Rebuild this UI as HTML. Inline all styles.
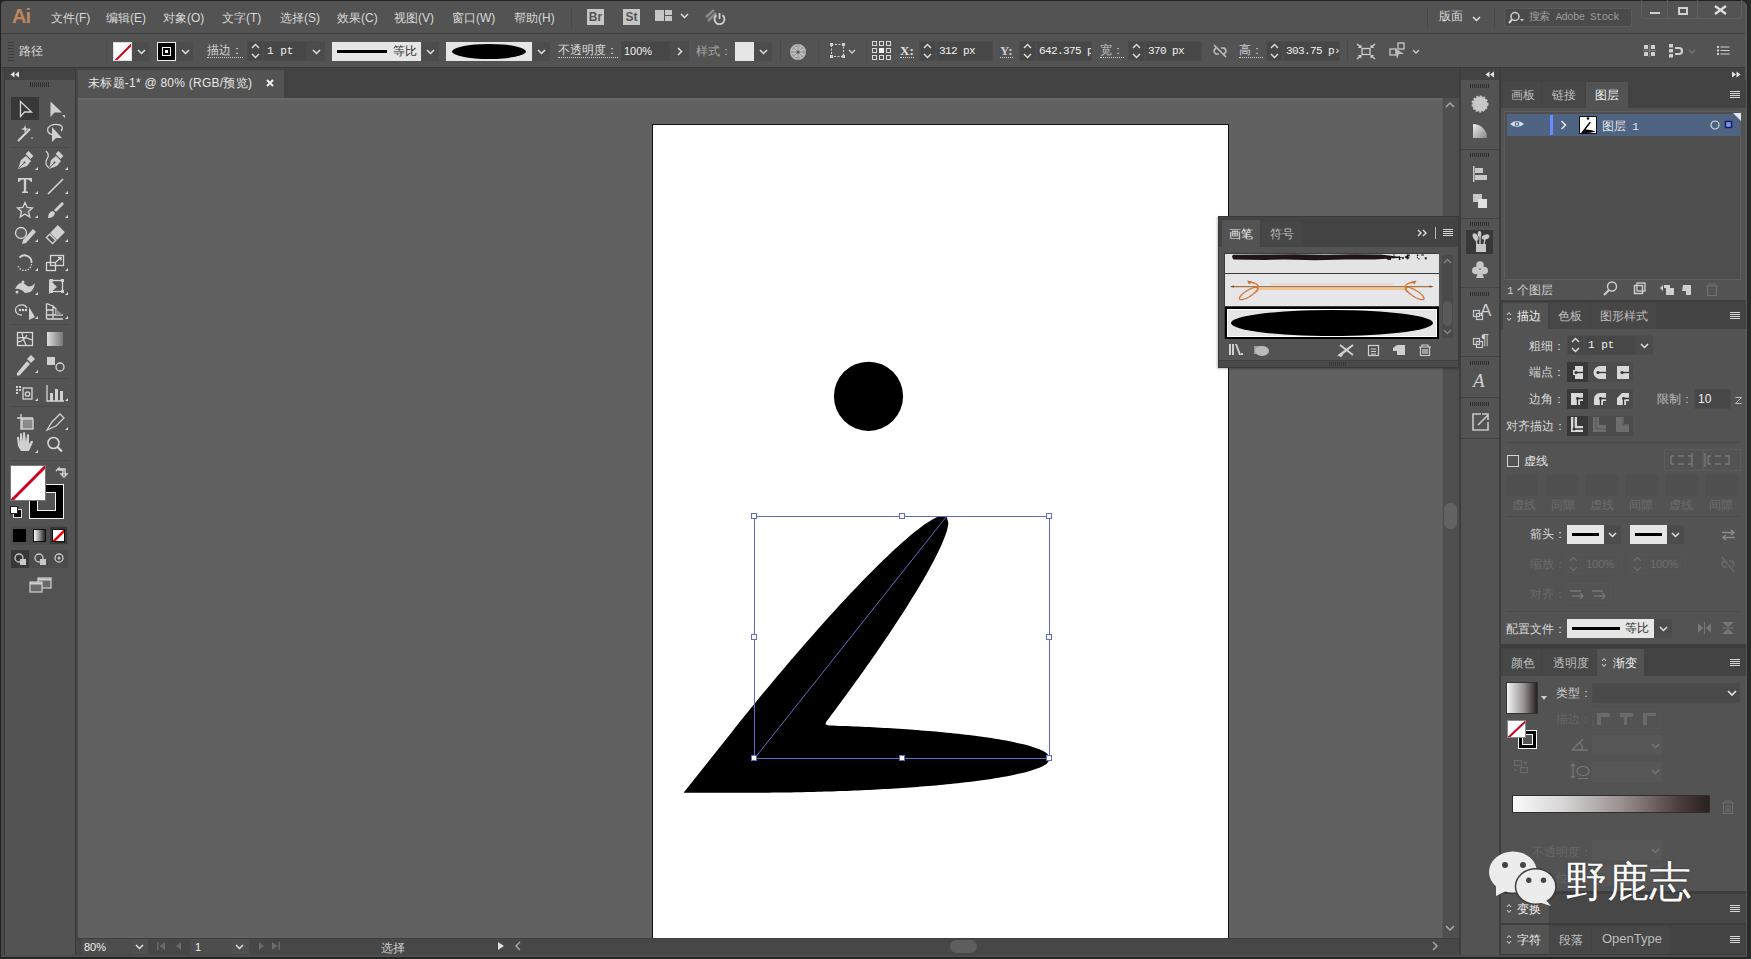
<!DOCTYPE html>
<html><head><meta charset="utf-8">
<style>
*{margin:0;padding:0;box-sizing:border-box}
html,body{width:1751px;height:959px;overflow:hidden;background:#2a2a2a;font-family:"Liberation Sans",sans-serif;color:#d8d8d8}
.a{position:absolute}
.t{position:absolute;white-space:nowrap;font-size:12px;line-height:14px}
.m{font-family:"Liberation Mono",monospace}
.s{font-family:"Liberation Serif",serif}
.box{position:absolute;background:#474747;border:1px solid #4c4c4c}
.lite{position:absolute;background:#e6e6e6}
.ul{border-bottom:1px dotted #cfcfcf}
svg{position:absolute;overflow:visible}
.dim{color:#6e6e6e}
</style></head><body>
<!-- window -->
<div class="a" style="left:0;top:0;width:1751px;height:959px;background:#222"></div>
<div class="a" style="left:1px;top:1px;width:1745px;height:955px;background:#535353;border-radius:4px 4px 0 0"></div>

<!-- ============ MENU BAR ============ -->
<div class="a" style="left:1px;top:33px;width:1745px;height:1px;background:#3f3f3f"></div>
<div class="t" style="left:12px;top:6px;font-size:20px;line-height:20px;font-weight:bold;color:#bf875e;letter-spacing:-1px">Ai</div>
<div class="t" style="left:51px;top:11px">文件(F)</div>
<div class="t" style="left:106px;top:11px">编辑(E)</div>
<div class="t" style="left:163px;top:11px">对象(O)</div>
<div class="t" style="left:222px;top:11px">文字(T)</div>
<div class="t" style="left:280px;top:11px">选择(S)</div>
<div class="t" style="left:337px;top:11px">效果(C)</div>
<div class="t" style="left:394px;top:11px">视图(V)</div>
<div class="t" style="left:452px;top:11px">窗口(W)</div>
<div class="t" style="left:514px;top:11px">帮助(H)</div>
<div class="a" style="left:571px;top:8px;width:1px;height:22px;background:#4a4a4a"></div>
<div class="a" style="left:587px;top:9px;width:17px;height:16px;background:#c6c6c6"></div>
<div class="t" style="left:588px;top:10px;font-size:12px;font-weight:bold;color:#555;width:15px;text-align:center">Br</div>
<div class="a" style="left:623px;top:9px;width:17px;height:16px;background:#c6c6c6"></div>
<div class="t" style="left:624px;top:10px;font-size:12px;font-weight:bold;color:#555;width:15px;text-align:center">St</div>
<div class="a" style="left:655px;top:10px;width:9px;height:11px;background:#c6c6c6"></div>
<div class="a" style="left:665px;top:10px;width:7px;height:5px;background:#c6c6c6"></div>
<div class="a" style="left:665px;top:16px;width:7px;height:5px;background:#c6c6c6"></div>
<svg style="left:680px;top:13px" width="9" height="6"><path d="M1 1 L4.5 4.5 L8 1" stroke="#e0e0e0" stroke-width="1.5" fill="none"/></svg>
<svg style="left:704px;top:8px" width="24" height="18"><path d="M2 9 L10 2 M4 13 L12 5" stroke="#8a8a8a" stroke-width="2.5" fill="none"/><path d="M12.5 7.2 A5 5 0 1 0 18.5 7.2" stroke="#d0d0d0" stroke-width="1.8" fill="none"/><path d="M15.5 5 V11" stroke="#d0d0d0" stroke-width="1.8"/></svg>

<div class="a" style="left:1427px;top:8px;width:1px;height:20px;background:#474747"></div>
<div class="t" style="left:1439px;top:9px;font-size:12px">版面</div>
<svg style="left:1472px;top:16px" width="9" height="6"><path d="M1 1 L4.5 4.5 L8 1" stroke="#e0e0e0" stroke-width="1.5" fill="none"/></svg>
<div class="a" style="left:1494px;top:8px;width:1px;height:20px;background:#474747"></div>
<div class="a" style="left:1504px;top:8px;width:128px;height:19px;background:#4a4a4a;border:1px solid #5a5a5a;border-radius:2px"></div>
<svg style="left:1508px;top:11px" width="18" height="14"><circle cx="7" cy="5.5" r="4" stroke="#cfcfcf" stroke-width="1.5" fill="none"/><path d="M4 8.5 L1 12" stroke="#cfcfcf" stroke-width="2"/><path d="M12 8 L16 8 L14 10.5Z" fill="#cfcfcf"/></svg>
<div class="t m" style="left:1529px;top:10px;font-size:10.5px;color:#9c9c9c;letter-spacing:-0.55px">搜索 Adobe Stock</div>
<div class="a" style="left:1641px;top:0px;width:101px;height:19px;border:1px solid #5e5e5e;border-top:none;border-radius:0 0 3px 3px"></div>
<div class="a" style="left:1667px;top:0px;width:1px;height:19px;background:#5e5e5e"></div>
<div class="a" style="left:1697px;top:0px;width:1px;height:19px;background:#5e5e5e"></div>
<div class="a" style="left:1650px;top:12px;width:10px;height:2px;background:#d0d0d0"></div>
<div class="a" style="left:1678px;top:7px;width:10px;height:8px;border:2px solid #d0d0d0;border-top-width:2px"></div>
<svg style="left:1714px;top:5px" width="13" height="10"><path d="M1 1 L12 9 M12 1 L1 9" stroke="#e0e0e0" stroke-width="2.2"/></svg>
<!-- ============ CONTROL BAR ============ -->
<div class="a" style="left:1px;top:67px;width:1745px;height:1px;background:#3a3a3a"></div>
<div class="a" style="left:8px;top:42px;width:6px;height:19px;background:repeating-linear-gradient(#3d3d3d 0 1px,transparent 1px 3px)"></div>
<div class="t" style="left:19px;top:44px">路径</div>
<div class="a" style="left:106px;top:40px;width:1px;height:22px;background:#4a4a4a"></div>
<!-- fill swatch -->
<div class="a" style="left:113px;top:42px;width:19px;height:19px;background:#fff;border:1px solid #ddd;overflow:hidden"><svg style="left:0;top:0" width="19" height="19"><path d="M1 18 L18 1" stroke="#d0021b" stroke-width="2"/></svg></div>
<div class="a" style="left:133px;top:42px;width:16px;height:19px;background:#4c4c4c"></div>
<svg style="left:137px;top:49px" width="9" height="6"><path d="M1 1 L4.5 4.5 L8 1" stroke="#e0e0e0" stroke-width="1.5" fill="none"/></svg>
<!-- stroke swatch -->
<div class="a" style="left:157px;top:42px;width:19px;height:19px;background:#000;border:1px solid #eee"></div>
<div class="a" style="left:162px;top:47px;width:9px;height:9px;border:1px solid #fff"></div>
<div class="a" style="left:165px;top:50px;width:3px;height:3px;background:#fff"></div>
<div class="a" style="left:177px;top:42px;width:16px;height:19px;background:#4c4c4c"></div>
<svg style="left:181px;top:49px" width="9" height="6"><path d="M1 1 L4.5 4.5 L8 1" stroke="#e0e0e0" stroke-width="1.5" fill="none"/></svg>
<div class="t ul" style="left:207px;top:44px;line-height:13px">描边：</div>
<!-- stroke weight -->
<div class="box" style="left:247px;top:41px;width:16px;height:20px"></div>
<svg style="left:251px;top:43px" width="9" height="16"><path d="M1 5 L4.5 1.5 L8 5 M1 11 L4.5 14.5 L8 11" stroke="#e0e0e0" stroke-width="1.4" fill="none"/></svg>
<div class="box" style="left:263px;top:41px;width:44px;height:20px"></div>
<div class="t m" style="left:267px;top:44px;font-size:11px;color:#f0f0f0">1 pt</div>
<div class="box" style="left:307px;top:41px;width:18px;height:20px;background:#4c4c4c"></div>
<svg style="left:312px;top:49px" width="9" height="6"><path d="M1 1 L4.5 4.5 L8 1" stroke="#e0e0e0" stroke-width="1.5" fill="none"/></svg>
<!-- profile -->
<div class="lite" style="left:332px;top:42px;width:89px;height:19px"></div>
<div class="a" style="left:337px;top:50px;width:50px;height:3px;background:#000"></div>
<div class="t" style="left:393px;top:44px;color:#333">等比</div>
<div class="a" style="left:422px;top:42px;width:17px;height:19px;background:#4c4c4c"></div>
<svg style="left:426px;top:49px" width="9" height="6"><path d="M1 1 L4.5 4.5 L8 1" stroke="#e0e0e0" stroke-width="1.5" fill="none"/></svg>
<!-- brush -->
<div class="lite" style="left:446px;top:42px;width:86px;height:19px"></div>
<div class="a" style="left:452px;top:44px;width:74px;height:15px;background:#000;border-radius:50%"></div>
<div class="a" style="left:533px;top:42px;width:17px;height:19px;background:#4c4c4c"></div>
<svg style="left:537px;top:49px" width="9" height="6"><path d="M1 1 L4.5 4.5 L8 1" stroke="#e0e0e0" stroke-width="1.5" fill="none"/></svg>
<div class="t ul" style="left:558px;top:44px;line-height:13px">不透明度：</div>
<div class="box" style="left:621px;top:41px;width:50px;height:20px"></div>
<div class="t" style="left:624px;top:44px;font-size:11px;color:#f0f0f0">100%</div>
<div class="box" style="left:671px;top:41px;width:18px;height:20px;background:#4c4c4c"></div>
<svg style="left:677px;top:47px" width="6" height="9"><path d="M1 1 L4.5 4.5 L1 8" stroke="#e0e0e0" stroke-width="1.5" fill="none"/></svg>
<div class="t" style="left:696px;top:44px;color:#a8a8a8">样式：</div>
<div class="lite" style="left:735px;top:42px;width:19px;height:19px"></div>
<div class="a" style="left:754px;top:42px;width:18px;height:19px;background:#4c4c4c"></div>
<svg style="left:759px;top:49px" width="9" height="6"><path d="M1 1 L4.5 4.5 L8 1" stroke="#e0e0e0" stroke-width="1.5" fill="none"/></svg>
<div class="a" style="left:780px;top:40px;width:1px;height:22px;background:#4a4a4a"></div>
<svg style="left:789px;top:43px" width="18" height="18"><circle cx="9" cy="9" r="8" fill="#bdbdbd"/><circle cx="9" cy="9" r="6" fill="none" stroke="#7a7a7a" stroke-width="0.8" stroke-dasharray="2 1.5"/><path d="M9 1 V17 M1 9 H17 M3.3 3.3 L14.7 14.7 M14.7 3.3 L3.3 14.7" stroke="#8a8a8a" stroke-width="0.8"/><circle cx="9" cy="9" r="1.5" fill="#555"/></svg>
<div class="a" style="left:818px;top:40px;width:1px;height:22px;background:#4a4a4a"></div>
<svg style="left:830px;top:43px" width="28" height="16"><rect x="1.5" y="1.5" width="12" height="12" fill="none" stroke="#cfcfcf" stroke-width="1" stroke-dasharray="2 1.5"/><rect x="0" y="0" width="3" height="3" fill="#cfcfcf"/><rect x="12" y="0" width="3" height="3" fill="#cfcfcf"/><rect x="0" y="12" width="3" height="3" fill="#cfcfcf"/><rect x="12" y="12" width="3" height="3" fill="#cfcfcf"/><path d="M19 7 L22 10 L25 7" stroke="#cfcfcf" stroke-width="1.3" fill="none"/></svg>
<div class="a" style="left:866px;top:40px;width:1px;height:22px;background:#4a4a4a"></div>
<svg style="left:872px;top:41px" width="20" height="20"><g fill="none" stroke="#d8d8d8" stroke-width="1"><rect x="0.5" y="0.5" width="4" height="4"/><rect x="7.5" y="0.5" width="4" height="4"/><rect x="14.5" y="0.5" width="4" height="4"/><rect x="0.5" y="7.5" width="4" height="4"/><rect x="14.5" y="7.5" width="4" height="4"/><rect x="0.5" y="14.5" width="4" height="4"/><rect x="7.5" y="14.5" width="4" height="4"/><rect x="14.5" y="14.5" width="4" height="4"/></g><rect x="7" y="7" width="5" height="5" fill="#f0f0f0"/></svg>
<div class="t s ul" style="left:900px;top:44px;font-size:13px;font-weight:bold;line-height:13px;color:#e0e0e0">X:</div>
<div class="box" style="left:919px;top:41px;width:17px;height:20px"></div>
<svg style="left:923px;top:43px" width="9" height="16"><path d="M1 5 L4.5 1.5 L8 5 M1 11 L4.5 14.5 L8 11" stroke="#e0e0e0" stroke-width="1.4" fill="none"/></svg>
<div class="box" style="left:936px;top:41px;width:57px;height:20px"></div>
<div class="t m" style="left:939px;top:44px;font-size:11px;letter-spacing:-0.6px;color:#f0f0f0">312 px</div>
<div class="t s ul" style="left:1000px;top:44px;font-size:13px;font-weight:bold;line-height:13px;color:#c8c8d8">Y:</div>
<div class="box" style="left:1019px;top:41px;width:17px;height:20px"></div>
<svg style="left:1023px;top:43px" width="9" height="16"><path d="M1 5 L4.5 1.5 L8 5 M1 11 L4.5 14.5 L8 11" stroke="#e0e0e0" stroke-width="1.4" fill="none"/></svg>
<div class="box" style="left:1036px;top:41px;width:56px;height:20px;overflow:hidden"><div class="t m" style="left:2px;top:2px;font-size:11px;letter-spacing:-0.6px;color:#f0f0f0">642.375 px</div></div>
<div class="t ul" style="left:1100px;top:44px;line-height:13px;color:#c8c8d8">宽：</div>
<div class="box" style="left:1128px;top:41px;width:17px;height:20px"></div>
<svg style="left:1132px;top:43px" width="9" height="16"><path d="M1 5 L4.5 1.5 L8 5 M1 11 L4.5 14.5 L8 11" stroke="#e0e0e0" stroke-width="1.4" fill="none"/></svg>
<div class="box" style="left:1145px;top:41px;width:57px;height:20px"></div>
<div class="t m" style="left:1148px;top:44px;font-size:11px;letter-spacing:-0.6px;color:#f0f0f0">370 px</div>
<svg style="left:1212px;top:44px" width="16" height="14"><path d="M4 4 Q0 7 4 10 L7 10 M9 4 L12 4 Q16 7 12 10 M2 1 L14 13" stroke="#bdbdbd" stroke-width="1.6" fill="none"/></svg>
<div class="t ul" style="left:1239px;top:44px;line-height:13px;color:#c8c8d8">高：</div>
<div class="box" style="left:1266px;top:41px;width:17px;height:20px"></div>
<svg style="left:1270px;top:43px" width="9" height="16"><path d="M1 5 L4.5 1.5 L8 5 M1 11 L4.5 14.5 L8 11" stroke="#e0e0e0" stroke-width="1.4" fill="none"/></svg>
<div class="box" style="left:1283px;top:41px;width:57px;height:20px;overflow:hidden"><div class="t m" style="left:2px;top:2px;font-size:11px;letter-spacing:-0.6px;color:#f0f0f0">303.75 p›</div></div>
<div class="a" style="left:1347px;top:40px;width:1px;height:22px;background:#4a4a4a"></div>
<svg style="left:1356px;top:43px" width="20" height="17"><rect x="6" y="5.5" width="8" height="6" fill="none" stroke="#cfcfcf" stroke-width="1.3"/><path d="M1 1 L4.5 4 M19 1 L15.5 4 M1 16 L4.5 13 M19 16 L15.5 13" stroke="#cfcfcf" stroke-width="1.5"/><path d="M5.5 5 L1.8 5 L5.5 1.5Z M14.5 5 L18.2 5 L14.5 1.5Z M5.5 12 L1.8 12 L5.5 15.5Z M14.5 12 L18.2 12 L14.5 15.5Z" fill="#cfcfcf"/></svg>
<svg style="left:1389px;top:42px" width="34" height="18"><rect x="1" y="7" width="6" height="6" fill="none" stroke="#cfcfcf" stroke-width="1.2"/><rect x="9" y="1" width="6" height="6" fill="none" stroke="#cfcfcf" stroke-width="1.2"/><path d="M6 6 L15 12 L10 12 L8 17Z" fill="#bdbdbd"/><path d="M24 8 L27 11 L30 8" stroke="#cfcfcf" stroke-width="1.3" fill="none"/></svg>
<svg style="left:1643px;top:44px" width="14" height="14"><g fill="#d0d0d0"><rect x="1" y="1" width="4" height="4"/><rect x="8" y="1" width="4" height="4"/><rect x="1" y="8" width="4" height="4"/><rect x="8" y="8" width="4" height="4"/></g><path d="M6.5 0 V13 M0 6.5 H13" stroke="#8a8a8a" stroke-width="0.8"/></svg>
<svg style="left:1668px;top:43px" width="34" height="16"><g fill="#d0d0d0"><rect x="1" y="1" width="4" height="3.5"/><rect x="1" y="6" width="4" height="3.5"/><rect x="1" y="11" width="4" height="3.5"/></g><path d="M7 5 H11 Q14 5 14 8 Q14 11 11 11 H7" stroke="#d0d0d0" stroke-width="2.2" fill="none"/><path d="M21 7 L24 10 L27 7" stroke="#777" stroke-width="1.3" fill="none"/></svg>
<svg style="left:1717px;top:46px" width="14" height="10"><g fill="#d0d0d0"><rect x="0" y="0" width="2" height="2"/><rect x="0" y="3.5" width="2" height="2"/><rect x="0" y="7" width="2" height="2"/><rect x="3.5" y="0.5" width="9" height="1"/><rect x="3.5" y="4" width="9" height="1"/><rect x="3.5" y="7.5" width="9" height="1"/></g></svg>
<!-- ============ LEFT TOOLBAR ============ -->
<div class="a" style="left:1px;top:68px;width:3px;height:888px;background:#4a4a4a"></div>
<div class="a" style="left:4px;top:68px;width:1px;height:888px;background:#383838"></div>
<div class="a" style="left:75px;top:68px;width:1px;height:888px;background:#3a3a3a"></div>
<div class="a" style="left:76px;top:68px;width:2px;height:888px;background:#474747"></div>
<div class="a" style="left:5px;top:68px;width:70px;height:12px;background:#434343"></div>
<svg style="left:10px;top:71px" width="10" height="7"><path d="M4.5 0.5 L0.5 3.5 L4.5 6.5Z M9 0.5 L5 3.5 L9 6.5Z" fill="#e6e6e6"/></svg>
<div class="a" style="left:30px;top:82px;width:20px;height:5px;background:repeating-linear-gradient(90deg,#2e2e2e 0 1px,transparent 1px 2px)"></div>
<div class="a" style="left:11px;top:97px;width:28px;height:23px;background:#383838"></div>
<g></g>
<svg style="left:0;top:0" width="80" height="600">
<g fill="none" stroke="#d6d6d6" stroke-width="1.3">
 <!-- selection -->
 <path d="M20.5 101.5 V116.5 L24.5 112 L31.5 112 Z" />
 <!-- magic wand -->
 <path d="M18 141 L30 129" stroke-width="2"/>
 <!-- lasso -->
 <path d="M53 135 Q46 133 48 128 Q52 123 60 125 Q64 127 61 131" />
 <!-- pen outline etc -->
 <!-- T -->
 <!-- line -->
 <path d="M48 194 L63 179" stroke-width="1.6"/>
 <!-- star -->
 <path d="M25 202.5 L27.3 207.5 L32.5 208 L28.5 211.5 L29.8 217 L25 214 L20.2 217 L21.5 211.5 L17.5 208 L22.7 207.5 Z" fill="#5c5c5c"/>
 <!-- shaper -->
 <circle cx="21" cy="233" r="5.5" fill="#5c5c5c"/>
 <!-- rotate -->
 <path d="M19.5 257.5 A7 7 0 0 1 31.5 263" stroke-width="1.8"/><path d="M31.5 264 A7 7 0 0 1 18 266" stroke-dasharray="1.5 1.3"/>
 <!-- scale -->
 <rect x="46.5" y="262.5" width="9" height="8"/><rect x="50.5" y="255.5" width="13" height="10"/><path d="M56 262 L61 257.5 M58 257.5 H61 V260.5"/>
 <!-- free transform -->
 <rect x="51.5" y="280.5" width="11" height="11"/><g fill="#d0d0d0" stroke="none"><rect x="50" y="279" width="3" height="3"/><rect x="61" y="279" width="3" height="3"/><rect x="50" y="290" width="3" height="3"/><rect x="61" y="290" width="3" height="3"/></g>
 <!-- shape builder -->
 <path d="M27 308 A6 5 0 1 0 22 315"/><circle cx="20" cy="310" r="0.6"/><circle cx="23" cy="310" r="0.6"/><circle cx="26" cy="310" r="0.6"/>
 <!-- perspective -->
 <path d="M46.5 303.5 V319 M46.5 303.5 L53 306 V319 M46.5 310 H53 M46.5 315 H63 M46.5 319 H63 M53 306 L56 309 V315"/><path d="M56 309 L63 315 H56Z" fill="#8a8a8a" stroke="none"/>
 <!-- mesh -->
 <rect x="17.5" y="332.5" width="15" height="13"/><path d="M18 338 Q25 336 32 340 M22 333 Q23 340 26 345 M18 342 Q24 341 27 335"/>
 <!-- blend -->
 <circle cx="60" cy="367" r="4"/>
 <!-- symbol sprayer -->
 <rect x="23" y="388" width="9" height="11"/><circle cx="27.5" cy="394" r="2.2"/>
 <!-- graph -->
 <path d="M47 385 V401 H64"/>
 <!-- artboard -->
 <path d="M17 418 H33 M21 414 V430"/><rect x="22" y="419" width="11" height="10" fill="#8a8a8a"/>
 <!-- zoom -->
 <circle cx="53.5" cy="443" r="5.5" stroke-width="1.6"/><path d="M57.5 447 L62 451.5" stroke-width="2.2"/>
</g>
<g fill="#d0d0d0">
 <!-- direct selection -->
 <path d="M50.5 101.5 V117 L54.5 112.5 L62 112.5 Z"/>
 <path d="M62 115 L65 115 L65 118 Z"/>
 <path d="M25 125 L26 128 L29 129 L26 130 L25 133 L24 130 L21 129 L24 128Z"/>
 <path d="M32 137 L33 138 L32 139 L31 138Z"/>
 <path d="M52 127 L52 142 L56 138 L62 138Z"/>
 <!-- pen -->
 <path d="M18 169 L21 160 L26 156 L31 161 L27 166 Z"/><rect x="26" y="153" width="7" height="4" transform="rotate(45 29.5 155)"/>
 <path d="M49 169 L51 160 L56 156 L61 161 L57 166 Z"/><rect x="56" y="153" width="7" height="4" transform="rotate(45 59.5 155)"/><path d="M49 168 Q44 164 47 159 Q50 155 46 151" fill="none" stroke="#d0d0d0" stroke-width="1.3"/>
 <path d="M19 168 L24 163 M49.5 168 L54 163" stroke="#535353" stroke-width="1"/><circle cx="24.5" cy="162.5" r="1" fill="#535353"/><circle cx="54.5" cy="162.5" r="1" fill="#535353"/>
 <!-- T -->
 <path d="M18 178 H32 V182 H31 Q30 179.5 27 179.5 H26.2 V191.5 H28 V193 H22 V191.5 H23.8 V179.5 H23 Q20 179.5 19 182 H18Z"/>
 <!-- brush -->
 <path d="M48 218 Q48 212 53 211 L55 213 Q54 218 48 218Z"/><path d="M54 210 L62 202 L64 204 L56 212Z"/>
 <!-- shaper pencil -->
 <path d="M23 240 L33 229 L36 232 L26 243 L22 244Z"/>
 <!-- eraser -->
 <g transform="rotate(45 55 235)"><rect x="50" y="226" width="10" height="11"/><rect x="50.7" y="238.2" width="8.6" height="4.6" fill="none" stroke="#d0d0d0" stroke-width="1.4"/></g>
 <!-- warp -->
 <path d="M15 289 Q20 279 26 285 Q30 289 35 283 Q34 293 25 293 Q20 288 15 289Z"/>
 <circle cx="17" cy="292" r="1.5"/><circle cx="23" cy="282" r="1.5"/>
 <path d="M49 279 L49 294 L57 287Z"/>
 <path d="M29 307 L29 320 L35 317Z"/>
 <!-- gradient tool -->
 <rect x="47" y="332" width="16" height="14" fill="url(#gt)"/>
 <!-- eyedropper -->
 <path d="M17 373 L27 361 L30 364 L20 375 Q16 377 17 373Z"/><path d="M27 359 L31 355 L35 359 L31 363Z"/>
 <rect x="47" y="357" width="8" height="8"/>
 <!-- sprayer dots -->
 <rect x="16" y="386" width="2" height="2"/><rect x="19" y="386" width="2" height="2"/><rect x="16" y="389" width="2" height="2"/><rect x="19" y="389" width="2" height="2"/><rect x="16" y="392" width="2" height="2"/>
 <!-- graph bars -->
 <rect x="50" y="393" width="3" height="8"/><rect x="55" y="389" width="3" height="12"/><rect x="60" y="391" width="3" height="10"/>
 <!-- slice -->
 <path d="M47 430 L52 422 L60 414 L64 418 L56 426 Z" fill="none" stroke="#d0d0d0" stroke-width="1.3"/>
 <!-- hand -->
 <path d="M18 446 L17 438 Q17 436 19 437 L20 443 L20 434 Q21 432 22 434 L23 442 L23 433 Q24 431 25 433 L26 442 L27 435 Q28 433 29 435 L29 444 L31 441 Q33 440 33 442 L29 451 H21 Z"/>
</g>
<defs><linearGradient id="gt"><stop offset="0" stop-color="#ddd"/><stop offset="1" stop-color="#777"/></linearGradient></defs>
<g fill="#d6d6d6">
 <path d="M35 170 L38 170 L38 167Z"/><path d="M65 170 L68 170 L68 167Z"/>
 <path d="M35 194 L38 194 L38 191Z"/><path d="M65 194 L68 194 L68 191Z"/>
 <path d="M35 218 L38 218 L38 215Z"/><path d="M65 218 L68 218 L68 215Z"/>
 <path d="M35 242 L38 242 L38 239Z"/><path d="M65 242 L68 242 L68 239Z"/>
 <path d="M35 271 L38 271 L38 268Z"/><path d="M65 271 L68 271 L68 268Z"/>
 <path d="M35 295 L38 295 L38 292Z"/><path d="M65 295 L68 295 L68 292Z"/>
 <path d="M35 319 L38 319 L38 316Z"/><path d="M65 319 L68 319 L68 316Z"/>
 <path d="M35 373 L38 373 L38 370Z"/>
 <path d="M35 401 L38 401 L38 398Z"/><path d="M65 401 L68 401 L68 398Z"/>
 <path d="M65 430 L68 430 L68 427Z"/><path d="M35 453 L38 453 L38 450Z"/>
</g>
<g stroke="#494949" stroke-width="1">
 <path d="M10 147.5 H70 M10 324.5 H70 M10 378.5 H70 M10 406.5 H70 M10 460.5 H70"/>
</g>
</svg>
<!-- fill stroke -->
<div class="a" style="left:29px;top:484px;width:35px;height:35px;background:#000;border:1px solid #f2f2f2"></div>
<div class="a" style="left:37px;top:492px;width:19px;height:19px;background:#535353;border:1px solid #f2f2f2"></div>
<div class="a" style="left:10px;top:465px;width:36px;height:36px;background:#fff;border:1px solid #777;overflow:hidden"><svg style="left:0;top:0" width="36" height="36"><path d="M0 35 L35 0" stroke="#d0021b" stroke-width="3"/></svg></div>
<svg style="left:54px;top:466px" width="13" height="13"><path d="M2 5 L5 2 L5 4 H9 V8 H7 L10 11 L13 8 H11 V3 H5" fill="none" stroke="#d6d6d6" stroke-width="1.4"/></svg>
<div class="a" style="left:13px;top:509px;width:9px;height:9px;background:#000;border:1px solid #ddd"></div>
<div class="a" style="left:10px;top:506px;width:8px;height:8px;background:#fff;border:1px solid #222"></div>
<div class="a" style="left:11px;top:526px;width:57px;height:19px;background:#4c4c4c"></div>
<div class="a" style="left:13px;top:529px;width:13px;height:13px;background:#000"></div>
<div class="a" style="left:33px;top:529px;width:13px;height:13px;background:linear-gradient(90deg,#fff,#222);border:1px solid #111"></div>
<div class="a" style="left:50px;top:527px;width:17px;height:17px;background:#383838"></div>
<div class="a" style="left:52px;top:529px;width:13px;height:13px;background:#fff;border:1px solid #111;overflow:hidden"><svg style="left:0;top:0" width="13" height="13"><path d="M0 12 L12 0" stroke="#e00" stroke-width="2.5"/></svg></div>
<div class="a" style="left:11px;top:550px;width:57px;height:18px;background:#4c4c4c"></div>
<div class="a" style="left:11px;top:550px;width:18px;height:18px;background:#383838"></div>
<svg style="left:13px;top:552px" width="54" height="15"><g fill="none" stroke="#c8c8c8" stroke-width="1.3"><circle cx="6" cy="6" r="4"/><circle cx="26" cy="6" r="4"/><circle cx="46" cy="6" r="4"/></g><rect x="7" y="7" width="6" height="6" fill="#c8c8c8"/><rect x="27" y="7" width="6" height="6" fill="#c8c8c8"/><circle cx="46" cy="6" r="1.5" fill="#c8c8c8"/></svg>
<svg style="left:29px;top:577px" width="24" height="17"><rect x="9" y="1" width="13" height="10" fill="#6a6a6a" stroke="#d0d0d0" stroke-width="1.2"/><rect x="1" y="5" width="12" height="10" fill="#6a6a6a" stroke="#d0d0d0" stroke-width="1.2"/><path d="M9 2.5 H22" stroke="#d0d0d0" stroke-width="2"/><path d="M1 6.5 H13" stroke="#d0d0d0" stroke-width="2"/></svg>

<!-- ============ TAB ROW / CANVAS ============ -->
<div class="a" style="left:78px;top:68px;width:1381px;height:30px;background:#434343"></div>
<div class="a" style="left:78px;top:70px;width:206px;height:28px;background:#535353"></div>
<div class="t" style="left:88px;top:76px;color:#e6e6e6;letter-spacing:0.25px">未标题-1* @ 80% (RGB/预览)</div>
<svg style="left:266px;top:79px" width="8" height="8"><path d="M1 1 L7 7 M7 1 L1 7" stroke="#f0f0f0" stroke-width="2"/></svg>
<div class="a" style="left:78px;top:98px;width:1364px;height:840px;background:#616161"></div>
<div class="a" style="left:78px;top:98px;width:1364px;height:2px;background:#686868"></div>
<div class="a" style="left:1442px;top:98px;width:17px;height:840px;background:#4f4f4f;border-left:1px solid #5a5a5a"></div>
<svg style="left:1445px;top:101px" width="10" height="7"><path d="M1 6 L5 2 L9 6" stroke="#aaa" stroke-width="1.5" fill="none"/></svg>
<svg style="left:1445px;top:925px" width="10" height="7"><path d="M1 1 L5 5 L9 1" stroke="#aaa" stroke-width="1.5" fill="none"/></svg>
<div class="a" style="left:1444px;top:503px;width:13px;height:26px;background:#626262;border-radius:6px"></div>
<!-- artboard -->
<div class="a" style="left:652px;top:124px;width:577px;height:814px;background:#fff;border:1px solid #111;border-bottom:none"></div>
<svg style="left:0;top:0" width="1440" height="940">
 <circle cx="868.5" cy="396.3" r="34.6" fill="#000"/>
 <path d="M946.5 516.5 L939.8 516.1 L935.7 517.8 L931.9 519.7 L928.4 521.9 L925.1 524.1 L921.8 526.5 L918.6 528.9 L915.5 531.3 L912.4 533.8 L909.4 536.3 L906.4 538.9 L903.4 541.5 L900.5 544.1 L897.6 546.7 L894.7 549.3 L891.8 552.0 L889.0 554.7 L886.2 557.4 L883.4 560.1 L880.6 562.8 L877.8 565.5 L875.1 568.3 L872.3 571.0 L869.6 573.8 L866.8 576.5 L864.1 579.3 L861.4 582.1 L858.7 584.9 L856.1 587.7 L853.4 590.5 L850.7 593.3 L848.1 596.1 L845.4 599.0 L842.8 601.8 L840.1 604.6 L837.5 607.5 L834.9 610.3 L832.3 613.2 L829.7 616.1 L827.1 618.9 L824.5 621.8 L821.9 624.7 L819.4 627.6 L816.8 630.5 L814.2 633.4 L811.7 636.3 L809.1 639.2 L806.6 642.1 L804.0 645.0 L801.5 647.9 L799.0 650.8 L796.4 653.8 L793.9 656.7 L791.4 659.6 L788.9 662.6 L786.4 665.5 L783.9 668.4 L781.4 671.4 L778.9 674.3 L776.4 677.3 L773.9 680.3 L771.5 683.2 L769.0 686.2 L766.5 689.2 L764.1 692.1 L761.6 695.1 L759.2 698.1 L756.7 701.1 L754.3 704.1 L751.8 707.1 L749.4 710.1 L747.0 713.1 L744.5 716.1 L742.1 719.1 L739.7 722.1 L737.3 725.1 L734.9 728.1 L732.5 731.2 L730.1 734.2 L727.7 737.2 L683.6 792.7 L758.2 792.7 L761.9 792.7 L765.6 792.7 L769.3 792.7 L773.0 792.6 L776.7 792.6 L780.4 792.6 L784.1 792.5 L787.8 792.5 L791.5 792.4 L795.2 792.3 L798.9 792.3 L802.6 792.2 L806.3 792.1 L810.0 792.0 L813.7 791.9 L817.4 791.8 L821.1 791.7 L824.8 791.6 L828.5 791.5 L832.2 791.4 L835.9 791.3 L839.6 791.1 L843.3 791.0 L847.0 790.9 L850.7 790.7 L854.4 790.6 L858.1 790.4 L861.8 790.2 L865.5 790.1 L869.2 789.9 L872.9 789.7 L876.6 789.5 L880.3 789.3 L884.0 789.1 L887.7 788.9 L891.4 788.7 L895.1 788.4 L898.8 788.2 L902.5 787.9 L906.2 787.7 L909.9 787.4 L913.6 787.2 L917.3 786.9 L921.0 786.6 L924.7 786.3 L928.4 786.0 L932.1 785.7 L935.8 785.4 L939.5 785.0 L943.2 784.7 L946.9 784.3 L950.6 783.9 L954.3 783.6 L958.0 783.2 L961.7 782.7 L965.4 782.3 L969.1 781.9 L972.8 781.4 L976.5 780.9 L980.2 780.5 L983.9 779.9 L987.6 779.4 L991.3 778.9 L995.0 778.3 L998.7 777.7 L1002.4 777.0 L1006.1 776.4 L1009.8 775.7 L1013.5 774.9 L1017.2 774.1 L1020.9 773.3 L1024.6 772.4 L1028.3 771.4 L1032.0 770.3 L1035.7 769.1 L1039.4 767.7 L1043.1 766.0 L1046.8 763.8 L1050.5 758.5 L1050.5 758.5 L1046.8 753.2 L1043.1 751.0 L1039.4 749.3 L1035.7 747.9 L1032.0 746.7 L1028.3 745.6 L1024.6 744.6 L1020.9 743.7 L1017.2 742.9 L1013.5 742.1 L1009.8 741.3 L1006.1 740.6 L1002.4 740.0 L998.7 739.3 L995.0 738.7 L991.3 738.1 L987.6 737.6 L983.9 737.1 L980.2 736.5 L976.5 736.1 L972.8 735.6 L969.1 735.1 L965.4 734.7 L961.7 734.3 L958.0 733.8 L954.3 733.4 L950.6 733.1 L946.9 732.7 L943.2 732.3 L939.5 732.0 L935.8 731.6 L932.1 731.3 L928.4 731.0 L924.7 730.7 L921.0 730.4 L917.3 730.1 L913.6 729.8 L909.9 729.6 L906.2 729.3 L902.5 729.1 L898.8 728.8 L895.1 728.6 L891.4 728.3 L887.7 728.1 L884.0 727.9 L880.3 727.7 L876.6 727.5 L872.9 727.3 L869.2 727.1 L865.5 726.9 L861.8 726.8 L858.1 726.6 L854.4 726.4 L850.7 726.3 L847.0 726.1 L843.3 726.0 L839.6 725.9 L835.9 725.7 L832.2 725.6 L828.5 725.5 L825.4 724.3 L826.3 721.8 L828.6 718.7 L830.9 715.6 L833.2 712.5 L835.5 709.4 L837.8 706.3 L840.1 703.2 L842.4 700.1 L844.7 697.0 L847.0 693.8 L849.2 690.7 L851.5 687.6 L853.8 684.5 L856.0 681.3 L858.3 678.2 L860.5 675.0 L862.8 671.9 L865.0 668.7 L867.2 665.6 L869.5 662.4 L871.7 659.2 L873.9 656.1 L876.1 652.9 L878.3 649.7 L880.5 646.5 L882.7 643.3 L884.9 640.1 L887.0 636.9 L889.2 633.7 L891.3 630.5 L893.5 627.2 L895.6 624.0 L897.7 620.8 L899.9 617.5 L902.0 614.3 L904.1 611.0 L906.2 607.7 L908.2 604.4 L910.3 601.1 L912.3 597.8 L914.4 594.5 L916.4 591.2 L918.4 587.9 L920.4 584.5 L922.4 581.2 L924.4 577.8 L926.3 574.4 L928.2 571.0 L930.1 567.6 L932.0 564.1 L933.8 560.7 L935.6 557.2 L937.4 553.6 L939.1 550.1 L940.8 546.5 L942.4 542.8 L943.9 539.1 L945.4 535.3 L946.7 531.4 L947.7 527.3 L948.4 522.9 L946.5 516.5Z" fill="#000"/>
 <g stroke="#5f6cc4" stroke-width="1" fill="none">
  <rect x="754.5" y="516.5" width="295" height="242"/>
  <path d="M946.5 516.5 L754.5 758.5"/>
 </g>
 <g fill="#fff" stroke="#5f6cc4" stroke-width="1">
  <rect x="751.5" y="513.5" width="5" height="5"/><rect x="899.5" y="513.5" width="5" height="5"/><rect x="1046.5" y="513.5" width="5" height="5"/>
  <rect x="751.5" y="634.5" width="5" height="5"/><rect x="1046.5" y="634.5" width="5" height="5"/>
  <rect x="751.5" y="755.5" width="5" height="5"/><rect x="899.5" y="755.5" width="5" height="5"/><rect x="1046.5" y="755.5" width="5" height="5"/>
 </g>
</svg>
<!-- status bar -->
<div class="a" style="left:78px;top:938px;width:1381px;height:17px;background:#474747;border-top:1px solid #3e3e3e"></div>
<div class="a" style="left:82px;top:939px;width:50px;height:15px;background:#4d4d4d"></div>
<div class="t" style="left:84px;top:940px;font-size:11px;color:#f0f0f0">80%</div>
<div class="a" style="left:132px;top:939px;width:16px;height:15px;background:#505050"></div>
<svg style="left:135px;top:944px" width="9" height="6"><path d="M1 1 L4.5 4.5 L8 1" stroke="#e0e0e0" stroke-width="1.5" fill="none"/></svg>
<svg style="left:156px;top:941px" width="30" height="10"><g fill="#6a6a6a"><rect x="1" y="1" width="1.5" height="8"/><path d="M9 1 L3.5 5 L9 9Z"/><path d="M25 1 L20 5 L25 9Z"/></g></svg>
<div class="a" style="left:190px;top:939px;width:42px;height:15px;background:#4d4d4d"></div>
<div class="t" style="left:195px;top:940px;font-size:11px;color:#f0f0f0">1</div>
<div class="a" style="left:232px;top:939px;width:17px;height:15px;background:#505050"></div>
<svg style="left:235px;top:944px" width="9" height="6"><path d="M1 1 L4.5 4.5 L8 1" stroke="#e0e0e0" stroke-width="1.5" fill="none"/></svg>
<svg style="left:256px;top:941px" width="30" height="10"><g fill="#6a6a6a"><path d="M3 1 L8 5 L3 9Z"/><path d="M16 1 L21.5 5 L16 9Z"/><rect x="22.5" y="1" width="1.5" height="8"/></g></svg>
<div class="t" style="left:381px;top:941px;font-size:12px;color:#cfcfcf">选择</div>
<svg style="left:497px;top:941px" width="8" height="10"><path d="M1 1 L7 5 L1 9Z" fill="#e0e0e0"/></svg>
<svg style="left:514px;top:941px" width="8" height="10"><path d="M6 1 L2 5 L6 9" stroke="#aaa" stroke-width="1.4" fill="none"/></svg>
<div class="a" style="left:950px;top:940px;width:27px;height:13px;background:#5e5e5e;border-radius:7px"></div>
<svg style="left:1431px;top:941px" width="8" height="10"><path d="M2 1 L6 5 L2 9" stroke="#aaa" stroke-width="1.4" fill="none"/></svg>
<!-- ============ BRUSH PANEL ============ -->
<div class="a" style="left:1218px;top:216px;width:241px;height:152px;background:#535353;border:1px solid #3a3a3a;box-shadow:-1px 1px 2px rgba(0,0,0,0.25)"></div>
<div class="a" style="left:1219px;top:217px;width:239px;height:30px;background:#434343"></div>
<div class="a" style="left:1222px;top:220px;width:38px;height:27px;background:#535353"></div>
<div class="t" style="left:1229px;top:227px;color:#ececec">画笔</div>
<div class="a" style="left:1261px;top:222px;width:41px;height:24px;background:#474747"></div>
<div class="t" style="left:1270px;top:227px;color:#bdbdbd">符号</div>
<svg style="left:1417px;top:229px" width="11" height="8"><path d="M1 1 L4 4 L1 7 M6 1 L9 4 L6 7" stroke="#e0e0e0" stroke-width="1.4" fill="none"/></svg>
<div class="a" style="left:1435px;top:227px;width:1px;height:12px;background:#bbb"></div>
<div class="a" style="left:1443px;top:229px;width:10px;height:7px;background:repeating-linear-gradient(#d6d6d6 0 1px,transparent 1px 2px)"></div>
<div class="a" style="left:1224px;top:253px;width:215px;height:86px;background:#3c3c3c"></div>
<div class="a" style="left:1225px;top:254px;width:214px;height:19px;background:#e4e4e4"></div>
<svg style="left:1225px;top:250px" width="214" height="14"><g fill="#1e1616"><path d="M8 4.8 Q6 7 8.5 9.6 L40 10 L60 9.4 L90 10.2 L120 9.6 L150 9.4 L165 8.6 L180 7.4 L156 4.6 L130 4.2 L100 4.8 L70 4.2 L40 4.6Z"/><rect x="161.89823135459457" y="6.1" width="1" height="2"/><rect x="177.2114612647976" y="7.1" width="1.5" height="2"/><rect x="168.49775832740397" y="4.2" width="1" height="1.5"/><rect x="180.1960019298097" y="5.9" width="3" height="2"/><rect x="181.2860152054027" y="7.2" width="3" height="1.5"/><rect x="153.27644296199065" y="6.9" width="3" height="1"/><rect x="150.6583995777437" y="7.5" width="1" height="1"/><rect x="191.873454104823" y="4.5" width="1.5" height="1.5"/><rect x="162.96770071640037" y="7.9" width="3" height="2"/><rect x="161.71654805233482" y="7.4" width="3" height="2"/><rect x="199.78224177552315" y="7.3" width="2" height="2"/><rect x="173.5131753761224" y="6.3" width="1.5" height="1.5"/><rect x="191.82307256371945" y="6.7" width="1" height="1.5"/><rect x="173.81766043496674" y="8.0" width="1.5" height="2"/><rect x="181.9534070272081" y="7.4" width="1" height="2"/><rect x="157.5308212011762" y="6.6" width="2" height="1.5"/><rect x="181.74303291425943" y="4.5" width="3" height="2"/><rect x="193.40226535716482" y="8.0" width="1" height="1.5"/><rect x="196" y="4.5" width="3" height="1"/></g></svg>
<div class="a" style="left:1225px;top:274px;width:214px;height:32px;background:#e6e6e8"></div>
<svg style="left:1225px;top:274px" width="214" height="32">
 <path d="M46 10.3 H168" stroke="#ebc7a6" stroke-width="1"/>
 <path d="M34 14.8 H180" stroke="#f0c493" stroke-width="2.2"/>
 <path d="M6 12.6 H207.5" stroke="#a8733f" stroke-width="1.3"/>
 <path d="M5 12.6 L9 11.6 V13.6Z M208.5 12.6 L204.5 11.6 V13.6Z" fill="#7a4a20"/>
 <g fill="none" stroke="#d77a3c" stroke-width="1.3">
  <ellipse cx="23.5" cy="19.5" rx="10.5" ry="3.2" transform="rotate(-32 23.5 19.5)"/>
  <path d="M24 8 Q33 9 33.5 13 Q33 17 31 18"/>
  <ellipse cx="190" cy="19.5" rx="10.5" ry="3.2" transform="rotate(32 190 19.5)"/>
  <path d="M189.5 8 Q180.5 9 180 13 Q180.5 17 182.5 18"/>
 </g>
 <path d="M22 6.5 L27 7.5 L24 10.5Z M191.5 6.5 L186.5 7.5 L189.5 10.5Z" fill="#c8703a"/>
</svg>
<div class="a" style="left:1225px;top:307px;width:214px;height:32px;background:#000"></div>
<div class="a" style="left:1227px;top:309px;width:210px;height:28px;background:#fff"></div>
<div class="a" style="left:1228px;top:310px;width:208px;height:26px;background:#e6e6e6"></div>
<div class="a" style="left:1231px;top:310px;width:202px;height:26px;background:#000;border-radius:50%"></div>
<div class="a" style="left:1442px;top:255px;width:11px;height:83px;background:#4a4a4a"></div>
<svg style="left:1443px;top:258px" width="9" height="6"><path d="M1 5 L4.5 1.5 L8 5" stroke="#888" stroke-width="1.3" fill="none"/></svg>
<svg style="left:1443px;top:329px" width="9" height="6"><path d="M1 1 L4.5 4.5 L8 1" stroke="#888" stroke-width="1.3" fill="none"/></svg>
<div class="a" style="left:1443px;top:301px;width:9px;height:25px;background:#5a5a5a;border-radius:5px"></div>
<svg style="left:1225px;top:340px" width="214" height="20">
 <g fill="#cfcfcf">
  <rect x="4" y="4" width="2" height="11"/><rect x="7" y="4" width="2" height="11"/><path d="M10 4 L12 4 L16 15 L14 15Z"/><rect x="16" y="13" width="2" height="2"/>
  <rect x="29" y="6" width="9" height="8" fill="#9a9a9a"/><ellipse cx="37" cy="11" rx="7" ry="5" fill="#bbb"/>
  <path d="M115 5 L128 15 M128 5 L118 13 L116 16 L114 15Z" stroke="#cfcfcf" stroke-width="1.8" fill="none"/>
 </g>
 <g fill="none" stroke="#cfcfcf" stroke-width="1.2"><rect x="143.5" y="5.5" width="10" height="10"/><path d="M146 9 H151 M146 11.5 H151 M146 14 H151"/></g>
 <path d="M172 5 H180 V15 H172 V11 H168 V8Z" fill="#cfcfcf"/>
 <g fill="none" stroke="#cfcfcf" stroke-width="1.2"><path d="M194 7 H206 M197 7 V5 H203 V7 M195.5 7 V15.5 H204.5 V7 M198 9 V14 M200 9 V14 M202 9 V14"/></g>
</svg>
<div class="a" style="left:1219px;top:360px;width:239px;height:7px;background:#4a4a4a;border-top:1px solid #3e3e3e"></div>
<div class="a" style="left:1329px;top:362px;width:18px;height:4px;background:repeating-linear-gradient(90deg,#383838 0 1px,transparent 1px 2px)"></div>

<!-- ============ DOCK COLUMN ============ -->
<div class="a" style="left:1459px;top:68px;width:2px;height:888px;background:#3d3d3d"></div>
<div class="a" style="left:1461px;top:68px;width:38px;height:12px;background:#434343"></div>
<svg style="left:1485px;top:71px" width="10" height="7"><path d="M4.5 0.5 L0.5 3.5 L4.5 6.5Z M9 0.5 L5 3.5 L9 6.5Z" fill="#e6e6e6"/></svg>
<div class="a" style="left:1499px;top:68px;width:2px;height:888px;background:#3d3d3d"></div>
<div class="a" style="left:1470px;top:84px;width:20px;height:4px;background:repeating-linear-gradient(90deg,#2e2e2e 0 1px,transparent 1px 2px)"></div>
<div class="a" style="left:1470px;top:153px;width:20px;height:4px;background:repeating-linear-gradient(90deg,#2e2e2e 0 1px,transparent 1px 2px)"></div>
<div class="a" style="left:1470px;top:222px;width:20px;height:4px;background:repeating-linear-gradient(90deg,#2e2e2e 0 1px,transparent 1px 2px)"></div>
<div class="a" style="left:1470px;top:292px;width:20px;height:4px;background:repeating-linear-gradient(90deg,#2e2e2e 0 1px,transparent 1px 2px)"></div>
<div class="a" style="left:1470px;top:361px;width:20px;height:4px;background:repeating-linear-gradient(90deg,#2e2e2e 0 1px,transparent 1px 2px)"></div>
<div class="a" style="left:1470px;top:402px;width:20px;height:4px;background:repeating-linear-gradient(90deg,#2e2e2e 0 1px,transparent 1px 2px)"></div>
<div class="a" style="left:1461px;top:149px;width:38px;height:1px;background:#444"></div>
<div class="a" style="left:1461px;top:218px;width:38px;height:1px;background:#444"></div>
<div class="a" style="left:1461px;top:287px;width:38px;height:1px;background:#444"></div>
<div class="a" style="left:1461px;top:356px;width:38px;height:1px;background:#444"></div>
<div class="a" style="left:1461px;top:397px;width:38px;height:1px;background:#444"></div>
<div class="a" style="left:1461px;top:438px;width:38px;height:1px;background:#444"></div>
<div class="a" style="left:1466px;top:230px;width:27px;height:24px;background:#383838"></div>
<svg style="left:1461px;top:80px" width="38" height="360">
 <circle cx="19" cy="24" r="7.5" fill="#c8c8c8" stroke="#c8c8c8" stroke-width="2" stroke-dasharray="2 1.5"/><circle cx="19" cy="24" r="6" fill="#c8c8c8"/>
 <path d="M12 44 A14 14 0 0 1 26 58 H12Z" fill="url(#dq)"/>
 <defs><linearGradient id="dq" x1="0" y1="0" x2="1" y2="1"><stop offset="0" stop-color="#eee"/><stop offset="1" stop-color="#888"/></linearGradient></defs>
 <g fill="#c8c8c8">
  <rect x="12" y="86" width="1.5" height="16"/><rect x="14" y="88" width="8" height="5"/><rect x="14" y="95" width="12" height="5"/>
  <rect x="12" y="114" width="9" height="8"/><rect x="17" y="119" width="9" height="9" fill="#e0e0e0"/>
  <path d="M15 164 H25 V172 H15Z"/><ellipse cx="14.5" cy="157" rx="2.5" ry="4" transform="rotate(-25 14.5 157)"/><ellipse cx="24.5" cy="157" rx="4" ry="2.5" transform="rotate(-20 24.5 157)"/><ellipse cx="18.5" cy="154" rx="1.8" ry="3"/><path d="M16 164 L15 159 M19 164 V156 M23 164 L24 159" stroke="#c8c8c8" stroke-width="1.3"/>
  <circle cx="19" cy="185" r="3.8"/><circle cx="14.8" cy="190.5" r="3.8"/><circle cx="23.2" cy="190.5" r="3.8"/><path d="M18 190 L15 198 H23 L20 190Z"/>
  <text x="19" y="236" font-size="17" font-family="Liberation Sans" text-anchor="start" fill="#d0d0d0">A</text>
  <text x="20" y="264" font-size="15" font-family="Liberation Sans" fill="#d0d0d0">¶</text>
  <text x="12" y="307" font-size="19" font-family="Liberation Serif" font-style="italic" fill="#d0d0d0">A</text>
 </g>
 <g fill="none" stroke="#c8c8c8" stroke-width="1.2"><rect x="12.5" y="230.5" width="6" height="6"/><rect x="15.5" y="233.5" width="6" height="6"/><rect x="12.5" y="258.5" width="6" height="6"/><rect x="15.5" y="261.5" width="6" height="6"/>
 <path d="M20 334 H12 V350 H27 V342 M17 345 L27 335 M21 334 H27 V340" stroke-width="1.6"/></g>
</svg>

<!-- ============ RIGHT PANELS ============ -->
<div class="a" style="left:1501px;top:68px;width:245px;height:12px;background:#434343"></div>
<svg style="left:1731px;top:71px" width="10" height="7"><path d="M1 0.5 L5 3.5 L1 6.5Z M5.5 0.5 L9.5 3.5 L5.5 6.5Z" fill="#e6e6e6"/></svg>
<div class="a" style="left:1745px;top:4px;width:2px;height:953px;background:#5a5a5a"></div><div class="a" style="left:1747px;top:0px;width:4px;height:959px;background:#2a2a2a"></div>
<!-- layers tabs -->
<div class="a" style="left:1501px;top:80px;width:245px;height:28px;background:#434343"></div>
<div class="a" style="left:1502px;top:82px;width:39px;height:26px;background:#474747"></div>
<div class="a" style="left:1542px;top:82px;width:43px;height:26px;background:#474747"></div>
<div class="a" style="left:1586px;top:82px;width:42px;height:26px;background:#535353"></div>
<div class="t" style="left:1511px;top:88px;color:#bdbdbd">画板</div>
<div class="t" style="left:1552px;top:88px;color:#bdbdbd">链接</div>
<div class="t" style="left:1595px;top:88px;color:#f0f0f0">图层</div>
<div class="a" style="left:1730px;top:91px;width:10px;height:7px;background:repeating-linear-gradient(#d6d6d6 0 1px,transparent 1px 2px)"></div>
<div class="a" style="left:1504px;top:111px;width:237px;height:169px;background:#4e4e4e;border:1px solid #5e5e5e"></div>
<div class="a" style="left:1507px;top:114px;width:233px;height:22px;background:#4f6383"></div>
<svg style="left:1509px;top:119px" width="16" height="10"><path d="M1 5 Q8 -1 15 5 Q8 11 1 5Z" fill="#d8e0ee"/><circle cx="8" cy="5" r="2.3" fill="#4f6383"/><circle cx="8" cy="5" r="1.2" fill="#d8e0ee"/></svg>
<div class="a" style="left:1550px;top:115px;width:3px;height:20px;background:#6a8bff"></div>
<svg style="left:1560px;top:120px" width="7" height="10"><path d="M1.5 1 L5.5 5 L1.5 9" stroke="#e6e6e6" stroke-width="1.5" fill="none"/></svg>
<div class="a" style="left:1579px;top:116px;width:18px;height:18px;background:#fff;border:1px solid #111"></div>
<svg style="left:1579px;top:116px" width="18" height="18"><circle cx="9" cy="2.5" r="1.3" fill="#000"/><path d="M2 17 L10.5 6 L12 6.5 L6.5 13.5 Q12 13.5 16.5 15.5 Q10 17.5 2 17Z" fill="#000"/></svg>
<div class="t" style="left:1602px;top:119px;color:#e6e6e6">图层 <span class="m" style="font-size:11px;margin-left:3px">1</span></div>
<svg style="left:1710px;top:119px" width="30" height="12"><circle cx="5" cy="6" r="4" fill="none" stroke="#d6d6d6" stroke-width="1.2"/><rect x="15.5" y="2.5" width="6" height="6" fill="#7f95e8" stroke="#101a60" stroke-width="1.4"/></svg>
<svg style="left:1733px;top:113px" width="8" height="8"><path d="M0 0 H8 V8Z" fill="#dfe6f5"/></svg>
<div class="t" style="left:1507px;top:283px;color:#cfcfcf"><span class="m" style="font-size:11px">1</span> 个图层</div>
<svg style="left:1600px;top:280px" width="130" height="18">
 <g fill="none" stroke="#cfcfcf" stroke-width="1.4"><circle cx="12" cy="6.5" r="4.5"/><path d="M9 10 L4 15" stroke-width="2"/>
 <rect x="34.5" y="5.5" width="8" height="8"/></g>
 <g fill="#cfcfcf"><rect x="37" y="3" width="8" height="8" fill="none" stroke="#cfcfcf" stroke-width="1.3"/>
 <rect x="64" y="5" width="6" height="3"/><rect x="66" y="8" width="8" height="7"/><path d="M60 8 L63 5 V11Z"/>
 <path d="M83 5 H91 V15 H86 V11 H82 Z"/></g>
 <g fill="none" stroke="#6e6e6e" stroke-width="1.2"><path d="M106 6 H118 M109 6 V4 H115 V6 M107.5 6 V15.5 H116.5 V6"/></g>
</svg>
<!-- stroke panel -->
<div class="a" style="left:1501px;top:300px;width:245px;height:2px;background:#3e3e3e"></div>
<div class="a" style="left:1501px;top:302px;width:245px;height:27px;background:#434343"></div>
<div class="a" style="left:1503px;top:303px;width:45px;height:26px;background:#535353"></div>
<div class="a" style="left:1549px;top:303px;width:41px;height:26px;background:#474747"></div>
<div class="a" style="left:1591px;top:303px;width:65px;height:26px;background:#474747"></div>
<svg style="left:1506px;top:311px" width="6" height="11"><path d="M1 4 L3 1.5 L5 4 M1 7 L3 9.5 L5 7" stroke="#d6d6d6" stroke-width="1" fill="none"/></svg>
<div class="t" style="left:1517px;top:309px;color:#f0f0f0">描边</div>
<div class="t" style="left:1558px;top:309px;color:#bdbdbd">色板</div>
<div class="t" style="left:1600px;top:309px;color:#bdbdbd">图形样式</div>
<div class="a" style="left:1730px;top:312px;width:10px;height:7px;background:repeating-linear-gradient(#d6d6d6 0 1px,transparent 1px 2px)"></div>
<div class="t" style="left:1529px;top:339px;color:#d8d8d8">粗细：</div>
<div class="box" style="left:1567px;top:335px;width:17px;height:20px"></div>
<svg style="left:1571px;top:337px" width="9" height="16"><path d="M1 5 L4.5 1.5 L8 5 M1 11 L4.5 14.5 L8 11" stroke="#e0e0e0" stroke-width="1.4" fill="none"/></svg>
<div class="box" style="left:1584px;top:335px;width:52px;height:20px"></div>
<div class="t m" style="left:1588px;top:338px;font-size:11px;color:#f0f0f0">1 pt</div>
<div class="box" style="left:1636px;top:335px;width:17px;height:20px;background:#4c4c4c"></div>
<svg style="left:1640px;top:343px" width="9" height="6"><path d="M1 1 L4.5 4.5 L8 1" stroke="#e0e0e0" stroke-width="1.5" fill="none"/></svg>
<div class="t" style="left:1529px;top:365px;color:#d8d8d8">端点：</div>
<div class="t" style="left:1529px;top:392px;color:#d8d8d8">边角：</div>
<div class="t" style="left:1506px;top:419px;color:#d8d8d8">对齐描边：</div>
<div class="a" style="left:1567px;top:362px;width:66px;height:20px;background:#4c4c4c"></div>
<div class="a" style="left:1567px;top:362px;width:21px;height:20px;background:#383838"></div>
<div class="a" style="left:1567px;top:389px;width:66px;height:20px;background:#4c4c4c"></div>
<div class="a" style="left:1567px;top:389px;width:21px;height:20px;background:#383838"></div>
<div class="a" style="left:1567px;top:416px;width:66px;height:20px;background:#4c4c4c"></div>
<div class="a" style="left:1567px;top:416px;width:21px;height:20px;background:#383838"></div>
<svg style="left:1567px;top:362px" width="70" height="75">
 <g fill="#d8d8d8">
  <rect x="8" y="4" width="8" height="13"/><rect x="6" y="8" width="2" height="5"/>
  <path d="M33 4 H39 V17 H33 A6.5 6.5 0 0 1 33 4Z"/>
  <rect x="50" y="4" width="12" height="13"/>
  <path d="M4 31 H16 V39 H13 V43 H4Z"/>
  <path d="M27 43 V37 A6 6 0 0 1 33 31 H39 V39 H36 V43Z"/>
  <path d="M50 43 V36 L55 31 H62 V39 H59 V43Z"/>
  <path d="M4 55 H10 V64 H16 V70 H4Z"/>
 </g>
 <g fill="none" stroke="#333" stroke-width="1.3">
  <path d="M9 10.5 H16"/><path d="M31 10.5 H39"/><path d="M55 10.5 H62"/>
  <path d="M16 36.5 H10.5 V43"/><path d="M39 36.5 H33.5 V43"/><path d="M62 36.5 H56.5 V43"/>
  <path d="M7 55 V67 H16"/>
 </g>
 <g fill="#333"><circle cx="9" cy="10.5" r="1.6"/><circle cx="31" cy="10.5" r="1.6"/><circle cx="55" cy="10.5" r="1.6"/><circle cx="10.5" cy="36.5" r="1.4"/><circle cx="33.5" cy="36.5" r="1.4"/><circle cx="56.5" cy="36.5" r="1.4"/><circle cx="7" cy="67" r="1.5"/></g>
 <g fill="#6e6e6e"><path d="M26 55 H32 V63 H39 V70 H26Z"/><path d="M49 55 H57 V62 H62 V70 H49Z"/></g>
 <g fill="none" stroke="#555" stroke-width="1"><path d="M29 55 V67 H39"/><path d="M56 55 V63 H62"/></g>
</svg>
<div class="t" style="left:1657px;top:392px;color:#bdbdbd">限制：</div>
<div class="box" style="left:1694px;top:389px;width:37px;height:20px"></div>
<div class="t" style="left:1698px;top:392px;font-size:12px;color:#f0f0f0">10</div>
<svg style="left:1735px;top:397px" width="7" height="7"><path d="M0.5 0.5 H6.5 L0.5 6.5 H6.5" stroke="#bbb" stroke-width="1" fill="none"/></svg>
<div class="a" style="left:1506px;top:442px;width:234px;height:1px;background:#4a4a4a"></div>
<div class="a" style="left:1507px;top:455px;width:12px;height:12px;border:1px solid #d6d6d6"></div>
<div class="t" style="left:1524px;top:454px;color:#e6e6e6">虚线</div>
<div class="a" style="left:1664px;top:449px;width:39px;height:22px;border:1px solid #5c5c5c"></div>
<div class="a" style="left:1703px;top:449px;width:38px;height:22px;border:1px solid #5c5c5c"></div>
<svg style="left:1668px;top:453px" width="70" height="14"><g fill="none" stroke="#7a7a7a" stroke-width="1.3"><path d="M3 3 V11 M3 3 H6 M3 11 H6 M10 3 H16 M10 11 H16 M20 3 H24 V11 H20 M24 0 V14"/><path d="M40 3 V11 M40 3 H43 M40 11 H43 M47 3 H53 M47 11 H53 M57 3 H61 V11 H57 M37 0 V14"/></g></svg>
<div class="a" style="left:1506px;top:475px;width:31px;height:21px;background:#4f4f4f"></div>
<div class="a" style="left:1546px;top:475px;width:32px;height:21px;background:#4f4f4f"></div>
<div class="a" style="left:1585px;top:475px;width:33px;height:21px;background:#4f4f4f"></div>
<div class="a" style="left:1625px;top:475px;width:33px;height:21px;background:#4f4f4f"></div>
<div class="a" style="left:1665px;top:475px;width:33px;height:21px;background:#4f4f4f"></div>
<div class="a" style="left:1705px;top:475px;width:33px;height:21px;background:#4f4f4f"></div>
<div class="t dim" style="left:1512px;top:498px;color:#6c6c6c">虚线</div>
<div class="t dim" style="left:1551px;top:498px;color:#6c6c6c">间隙</div>
<div class="t dim" style="left:1590px;top:498px;color:#6c6c6c">虚线</div>
<div class="t dim" style="left:1629px;top:498px;color:#6c6c6c">间隙</div>
<div class="t dim" style="left:1669px;top:498px;color:#6c6c6c">虚线</div>
<div class="t dim" style="left:1709px;top:498px;color:#6c6c6c">间隙</div>
<div class="a" style="left:1506px;top:516px;width:234px;height:1px;background:#4a4a4a"></div>
<div class="t" style="left:1530px;top:527px;color:#d8d8d8">箭头：</div>
<div class="lite" style="left:1567px;top:525px;width:37px;height:19px"></div>
<div class="a" style="left:1572px;top:533px;width:27px;height:3px;background:#000"></div>
<div class="a" style="left:1604px;top:525px;width:17px;height:19px;background:#4c4c4c"></div>
<svg style="left:1608px;top:532px" width="9" height="6"><path d="M1 1 L4.5 4.5 L8 1" stroke="#e0e0e0" stroke-width="1.5" fill="none"/></svg>
<div class="lite" style="left:1630px;top:525px;width:37px;height:19px"></div>
<div class="a" style="left:1635px;top:533px;width:27px;height:3px;background:#000"></div>
<div class="a" style="left:1667px;top:525px;width:17px;height:19px;background:#4c4c4c"></div>
<svg style="left:1671px;top:532px" width="9" height="6"><path d="M1 1 L4.5 4.5 L8 1" stroke="#e0e0e0" stroke-width="1.5" fill="none"/></svg>
<svg style="left:1721px;top:529px" width="15" height="12"><g fill="none" stroke="#8a8a8a" stroke-width="1.6"><path d="M1 3.5 H13 M10 1 L13 3.5 L10 6 M14 8.5 H2 M5 6 L2 8.5 L5 11"/></g></svg>
<div class="t" style="left:1530px;top:557px;color:#6a6a6a">缩放：</div>
<div class="a" style="left:1566px;top:554px;width:56px;height:19px;border:1px solid #565656"></div>
<div class="t" style="left:1586px;top:557px;font-size:11px;color:#6e6e6e">100%</div>
<div class="a" style="left:1630px;top:554px;width:56px;height:19px;border:1px solid #565656"></div>
<div class="t" style="left:1650px;top:557px;font-size:11px;color:#6e6e6e">100%</div>
<svg style="left:1569px;top:556px" width="120" height="16"><path d="M1 5 L4.5 1.5 L8 5 M1 11 L4.5 14.5 L8 11 M65 5 L68.5 1.5 L72 5 M65 11 L68.5 14.5 L72 11" stroke="#6a6a6a" stroke-width="1.3" fill="none"/></svg>
<svg style="left:1720px;top:556px" width="16" height="17"><path d="M4 5 Q0 8 4 11 L7 11 M9 5 L12 5 Q16 8 12 11 M2 1 L14 16" stroke="#6a6a6a" stroke-width="1.6" fill="none"/></svg>
<div class="t" style="left:1530px;top:587px;color:#6a6a6a">对齐：</div>
<div class="a" style="left:1566px;top:583px;width:45px;height:20px;border:1px solid #565656"></div>
<svg style="left:1569px;top:588px" width="40" height="12"><g fill="none" stroke="#777" stroke-width="1.3"><path d="M1 3 H12 M3 8 H14 M11 5 L14 8 L11 11 M23 3 H34 M25 8 H36 M33 5 L36 8 L33 11"/></g></svg>
<div class="a" style="left:1506px;top:611px;width:234px;height:1px;background:#4a4a4a"></div>
<div class="t" style="left:1506px;top:622px;color:#d8d8d8">配置文件：</div>
<div class="lite" style="left:1567px;top:619px;width:87px;height:19px"></div>
<div class="a" style="left:1572px;top:627px;width:48px;height:3px;background:#000"></div>
<div class="t" style="left:1625px;top:621px;color:#333">等比</div>
<div class="a" style="left:1654px;top:619px;width:18px;height:19px;background:#4c4c4c"></div>
<svg style="left:1659px;top:626px" width="9" height="6"><path d="M1 1 L4.5 4.5 L8 1" stroke="#e0e0e0" stroke-width="1.5" fill="none"/></svg>
<svg style="left:1697px;top:621px" width="40" height="14"><g fill="#777"><path d="M1 2 L6 7 L1 12Z M14 2 L9 7 L14 12Z"/><rect x="7" y="1" width="1" height="12"/><path d="M25 1 H37 L31 6Z M25 13 H37 L31 8Z"/><rect x="25" y="6.5" width="12" height="1"/></g></svg>

<!-- gradient panel -->
<div class="a" style="left:1501px;top:644px;width:245px;height:4px;background:#3e3e3e"></div>
<div class="a" style="left:1501px;top:648px;width:245px;height:28px;background:#434343"></div>
<div class="a" style="left:1502px;top:649px;width:39px;height:27px;background:#474747"></div>
<div class="a" style="left:1542px;top:649px;width:54px;height:27px;background:#474747"></div>
<div class="a" style="left:1597px;top:649px;width:47px;height:27px;background:#535353"></div>
<div class="t" style="left:1511px;top:656px;color:#bdbdbd">颜色</div>
<div class="t" style="left:1553px;top:656px;color:#bdbdbd">透明度</div>
<svg style="left:1601px;top:657px" width="6" height="11"><path d="M1 4 L3 1.5 L5 4 M1 7 L3 9.5 L5 7" stroke="#d6d6d6" stroke-width="1" fill="none"/></svg>
<div class="t" style="left:1613px;top:656px;color:#f0f0f0">渐变</div>
<div class="a" style="left:1730px;top:659px;width:10px;height:7px;background:repeating-linear-gradient(#d6d6d6 0 1px,transparent 1px 2px)"></div>
<div class="a" style="left:1506px;top:682px;width:32px;height:32px;background:linear-gradient(90deg,#f4f4f4,#9a9494 55%,#2a2020);border:1px solid #333"></div>
<svg style="left:1541px;top:696px" width="6" height="4"><path d="M0 0 H6 L3 4Z" fill="#ccc"/></svg>
<div class="t" style="left:1556px;top:686px;color:#d0d0d0">类型：</div>
<div class="box" style="left:1592px;top:683px;width:148px;height:20px;background:#4a4a4a"></div>
<svg style="left:1727px;top:690px" width="10" height="7"><path d="M1 1 L5 5 L9 1" stroke="#e0e0e0" stroke-width="1.6" fill="none"/></svg>
<div class="t" style="left:1556px;top:712px;color:#666">描边：</div>
<div class="a" style="left:1592px;top:709px;width:68px;height:20px;border:1px solid #565656"></div>
<svg style="left:1596px;top:712px" width="62" height="14"><g fill="#6a6a6a"><path d="M1 1 H14 V5 H5 V13 H1Z"/><path d="M24 1 H37 V5 H31 V13 H28 V5 H24Z"/><path d="M47 1 H60 V4 H51 V13 H47Z"/></g></svg>
<div class="a" style="left:1518px;top:730px;width:19px;height:19px;background:#000;border:1px solid #fff"></div>
<div class="a" style="left:1522px;top:734px;width:11px;height:11px;background:#535353;border:1px solid #fff"></div>
<div class="a" style="left:1507px;top:720px;width:19px;height:18px;background:#fff;border:1px solid #888;overflow:hidden"><svg style="left:0;top:0" width="19" height="18"><path d="M0 17 L18 0" stroke="#d0021b" stroke-width="2"/></svg></div>
<svg style="left:1513px;top:759px" width="18" height="16"><g fill="none" stroke="#6a6a6a" stroke-width="1.2"><rect x="1.5" y="1.5" width="7" height="5"/><rect x="7.5" y="8.5" width="7" height="5"/><path d="M11 3 L14 3 L12.5 5Z M1 11 L4 11"/></g></svg>
<svg style="left:1571px;top:737px" width="18" height="14"><path d="M1 13 H17 M1 13 L12 2 M9 6 Q12 9 11 13" stroke="#777" stroke-width="1.3" fill="none"/></svg>
<div class="a" style="left:1592px;top:735px;width:70px;height:20px;background:#575757"></div>
<svg style="left:1651px;top:743px" width="9" height="6"><path d="M1 1 L4.5 4.5 L8 1" stroke="#777" stroke-width="1.3" fill="none"/></svg>
<svg style="left:1571px;top:763px" width="19" height="17"><g fill="none" stroke="#777" stroke-width="1.2"><ellipse cx="12" cy="8" rx="6" ry="4.5"/><path d="M2 1 V15 M0 3 L2 1 L4 3 M0 13 L2 15 L4 13 M7 15.5 H17"/></g></svg>
<div class="a" style="left:1592px;top:762px;width:70px;height:20px;background:#575757"></div>
<svg style="left:1651px;top:769px" width="9" height="6"><path d="M1 1 L4.5 4.5 L8 1" stroke="#777" stroke-width="1.3" fill="none"/></svg>
<div class="a" style="left:1512px;top:795px;width:198px;height:18px;background:linear-gradient(90deg,#fafafa,#d8d6d6 25%,#9a9090 55%,#4a3e3c 85%,#2a201e);border:1px solid #2e2e2e"></div>
<svg style="left:1721px;top:800px" width="14" height="14"><g fill="none" stroke="#6a6a6a" stroke-width="1.1"><path d="M1 3 H13 M4 3 V1 H10 V3 M2.5 3 V13.5 H11.5 V3 M5 5 V12 M7 5 V12 M9 5 V12"/></g></svg>
<div class="t" style="left:1532px;top:845px;color:#666">不透明度：</div>
<div class="a" style="left:1592px;top:840px;width:70px;height:20px;background:#575757"></div>
<svg style="left:1651px;top:848px" width="9" height="6"><path d="M1 1 L4.5 4.5 L8 1" stroke="#777" stroke-width="1.3" fill="none"/></svg>
<div class="t" style="left:1556px;top:871px;color:#666">位置：</div>
<div class="a" style="left:1592px;top:866px;width:70px;height:20px;background:#575757"></div>

<!-- transform header -->
<div class="a" style="left:1501px;top:891px;width:245px;height:3px;background:#3e3e3e"></div>
<div class="a" style="left:1501px;top:894px;width:245px;height:29px;background:#474747"></div>
<div class="a" style="left:1501px;top:894px;width:48px;height:29px;background:#535353"></div>
<svg style="left:1506px;top:903px" width="6" height="11"><path d="M1 4 L3 1.5 L5 4 M1 7 L3 9.5 L5 7" stroke="#d6d6d6" stroke-width="1" fill="none"/></svg>
<div class="t" style="left:1517px;top:902px;color:#f0f0f0">变换</div>
<div class="a" style="left:1730px;top:905px;width:10px;height:7px;background:repeating-linear-gradient(#d6d6d6 0 1px,transparent 1px 2px)"></div>
<div class="a" style="left:1501px;top:923px;width:245px;height:2px;background:#3e3e3e"></div>
<div class="a" style="left:1501px;top:925px;width:245px;height:29px;background:#434343"></div>
<div class="a" style="left:1501px;top:925px;width:48px;height:29px;background:#535353"></div>
<div class="a" style="left:1550px;top:926px;width:41px;height:28px;background:#474747"></div>
<div class="a" style="left:1592px;top:926px;width:78px;height:28px;background:#474747"></div>
<svg style="left:1506px;top:934px" width="6" height="11"><path d="M1 4 L3 1.5 L5 4 M1 7 L3 9.5 L5 7" stroke="#d6d6d6" stroke-width="1" fill="none"/></svg>
<div class="t" style="left:1517px;top:933px;color:#f0f0f0">字符</div>
<div class="t" style="left:1559px;top:933px;color:#bdbdbd">段落</div>
<div class="t" style="left:1602px;top:932px;font-size:13px;color:#bdbdbd">OpenType</div>
<div class="a" style="left:1730px;top:936px;width:10px;height:7px;background:repeating-linear-gradient(#d6d6d6 0 1px,transparent 1px 2px)"></div>
<div class="a" style="left:1501px;top:954px;width:245px;height:1px;background:#3a3a3a"></div>
<div class="a" style="left:1px;top:955px;width:1746px;height:2px;background:#4e4e4e"></div>
<div class="a" style="left:0;top:957px;width:1751px;height:2px;background:#262626"></div>

<!-- watermark -->
<svg style="left:1480px;top:840px" width="90" height="75">
 <ellipse cx="33" cy="32" rx="24" ry="20.5" fill="#ececec"/>
 <path d="M16 46 L16 56 L28 50Z" fill="#ececec"/>
 <circle cx="25" cy="25" r="3" fill="#444"/><circle cx="43" cy="25" r="3" fill="#444"/>
 <ellipse cx="55.7" cy="46.5" rx="21" ry="18.5" fill="#3c3c3c"/>
 <ellipse cx="55.7" cy="46.5" rx="19.5" ry="17" fill="#ececec"/>
 <path d="M64 58 L71 66 L58 62Z" fill="#ececec"/>
 <circle cx="48.8" cy="40.3" r="2.7" fill="#444"/><circle cx="63.5" cy="40.3" r="2.7" fill="#444"/>
</svg>
<div class="t" style="left:1565px;top:858px;font-size:42px;line-height:48px;font-weight:500;color:#fafafa;text-shadow:0 0 2px rgba(0,0,0,0.5)">野鹿志</div>
</body></html>
